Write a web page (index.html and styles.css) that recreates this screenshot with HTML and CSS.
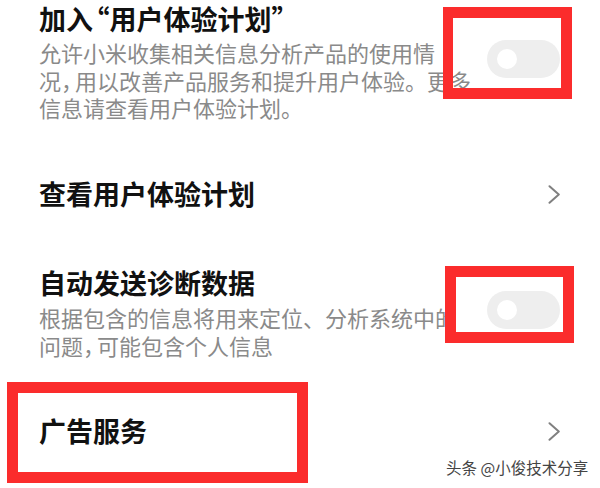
FILE: index.html
```html
<!DOCTYPE html>
<html lang="zh-CN">
<head>
<meta charset="utf-8">
<link rel="stylesheet" href="styles.css">
</head>
<body>
<div class="screen">
  <div class="row">
    <div class="text">
      <div class="title">加入<span class="q-open">“</span>用户体验计划”</div>
      <div class="desc">允许小米收集相关信息分析产品的使用情<br>况<span class="half">，</span>用以改善产品服务和提升用户体验。更多<br>信息请查看用户体验计划。</div>
    </div>
    <div class="switch"><span class="knob"></span></div>
  </div>
  <div class="row">
    <div class="text"><div class="title">查看用户体验计划</div></div>
    <svg class="chev" viewBox="0 0 12 19"><polyline points="1.5,1.2 10.8,9.5 1.5,17.8"/></svg>
  </div>
  <div class="row">
    <div class="text">
      <div class="title">自动发送诊断数据</div>
      <div class="desc">根据包含的信息将用来定位、分析系统中的<br>问题<span class="half">，</span>可能包含个人信息</div>
    </div>
    <div class="switch"><span class="knob"></span></div>
  </div>
  <div class="row">
    <div class="text"><div class="title">广告服务</div></div>
    <svg class="chev" viewBox="0 0 12 19"><polyline points="1.5,1.2 10.8,9.5 1.5,17.8"/></svg>
  </div>

  <div class="mark mark-1"></div>
  <div class="mark mark-2"></div>
  <div class="mark mark-3"></div>
  <div class="watermark">头条 @小俊技术分享</div>
</div>
</body>
</html>
```
FILE: styles.css
```css
html, body {
  margin: 0;
  padding: 0;
  background: #ffffff;
}
body {
  font-family: "Noto Sans CJK SC", "Noto Sans", sans-serif;
}
.screen {
  position: relative;
  width: 600px;
  height: 488px;
  overflow: hidden;
}
.row {
  display: flex;
  align-items: center;
  padding: 28px 40px 27px 39px;
}
.row:first-child {
  padding-top: 2px;
  padding-bottom: 27.5px;
}
.row:first-child .desc {
  margin-top: 3px;
}
.text {
  flex: 1;
  min-width: 0;
}
.title {
  font-size: 27px;
  line-height: 34px;
  font-weight: 700;
  color: #111111;
  white-space: nowrap;
}
.q-open {
  font-feature-settings: "halt";
  margin-left: 3px;
}
.desc {
  margin-top: 4px;
  font-size: 22px;
  line-height: 27.5px;
  color: #8a8a8a;
  white-space: nowrap;
}
.half {
  font-feature-settings: "halt";
  margin-right: 3px;
}
.switch {
  flex-shrink: 0;
  box-sizing: border-box;
  width: 73px;
  height: 38px;
  border-radius: 19px;
  background: #eeeeee;
  display: flex;
  align-items: center;
  padding-left: 10px;
  margin-bottom: 6px;
}
.knob {
  width: 20px;
  height: 20px;
  border-radius: 50%;
  background: #ffffff;
}
.chev {
  flex-shrink: 0;
  width: 12px;
  height: 19px;
}
.chev polyline {
  fill: none;
  stroke: #808080;
  stroke-width: 2;
  stroke-linecap: round;
  stroke-linejoin: round;
}
.mark {
  position: absolute;
  box-sizing: border-box;
  border: 11px solid #fb2c2c;
}
.mark-1 {
  left: 443px;
  top: 7px;
  width: 129px;
  height: 92px;
  border-left-width: 10px;
}
.mark-2 {
  left: 445px;
  top: 266px;
  width: 129px;
  height: 77px;
}
.mark-3 {
  left: 7px;
  top: 382px;
  width: 301px;
  height: 101px;
}
.watermark {
  position: absolute;
  left: 446px;
  top: 457px;
  font-size: 15.5px;
  line-height: 20px;
  color: #444444;
  white-space: nowrap;
}
```
